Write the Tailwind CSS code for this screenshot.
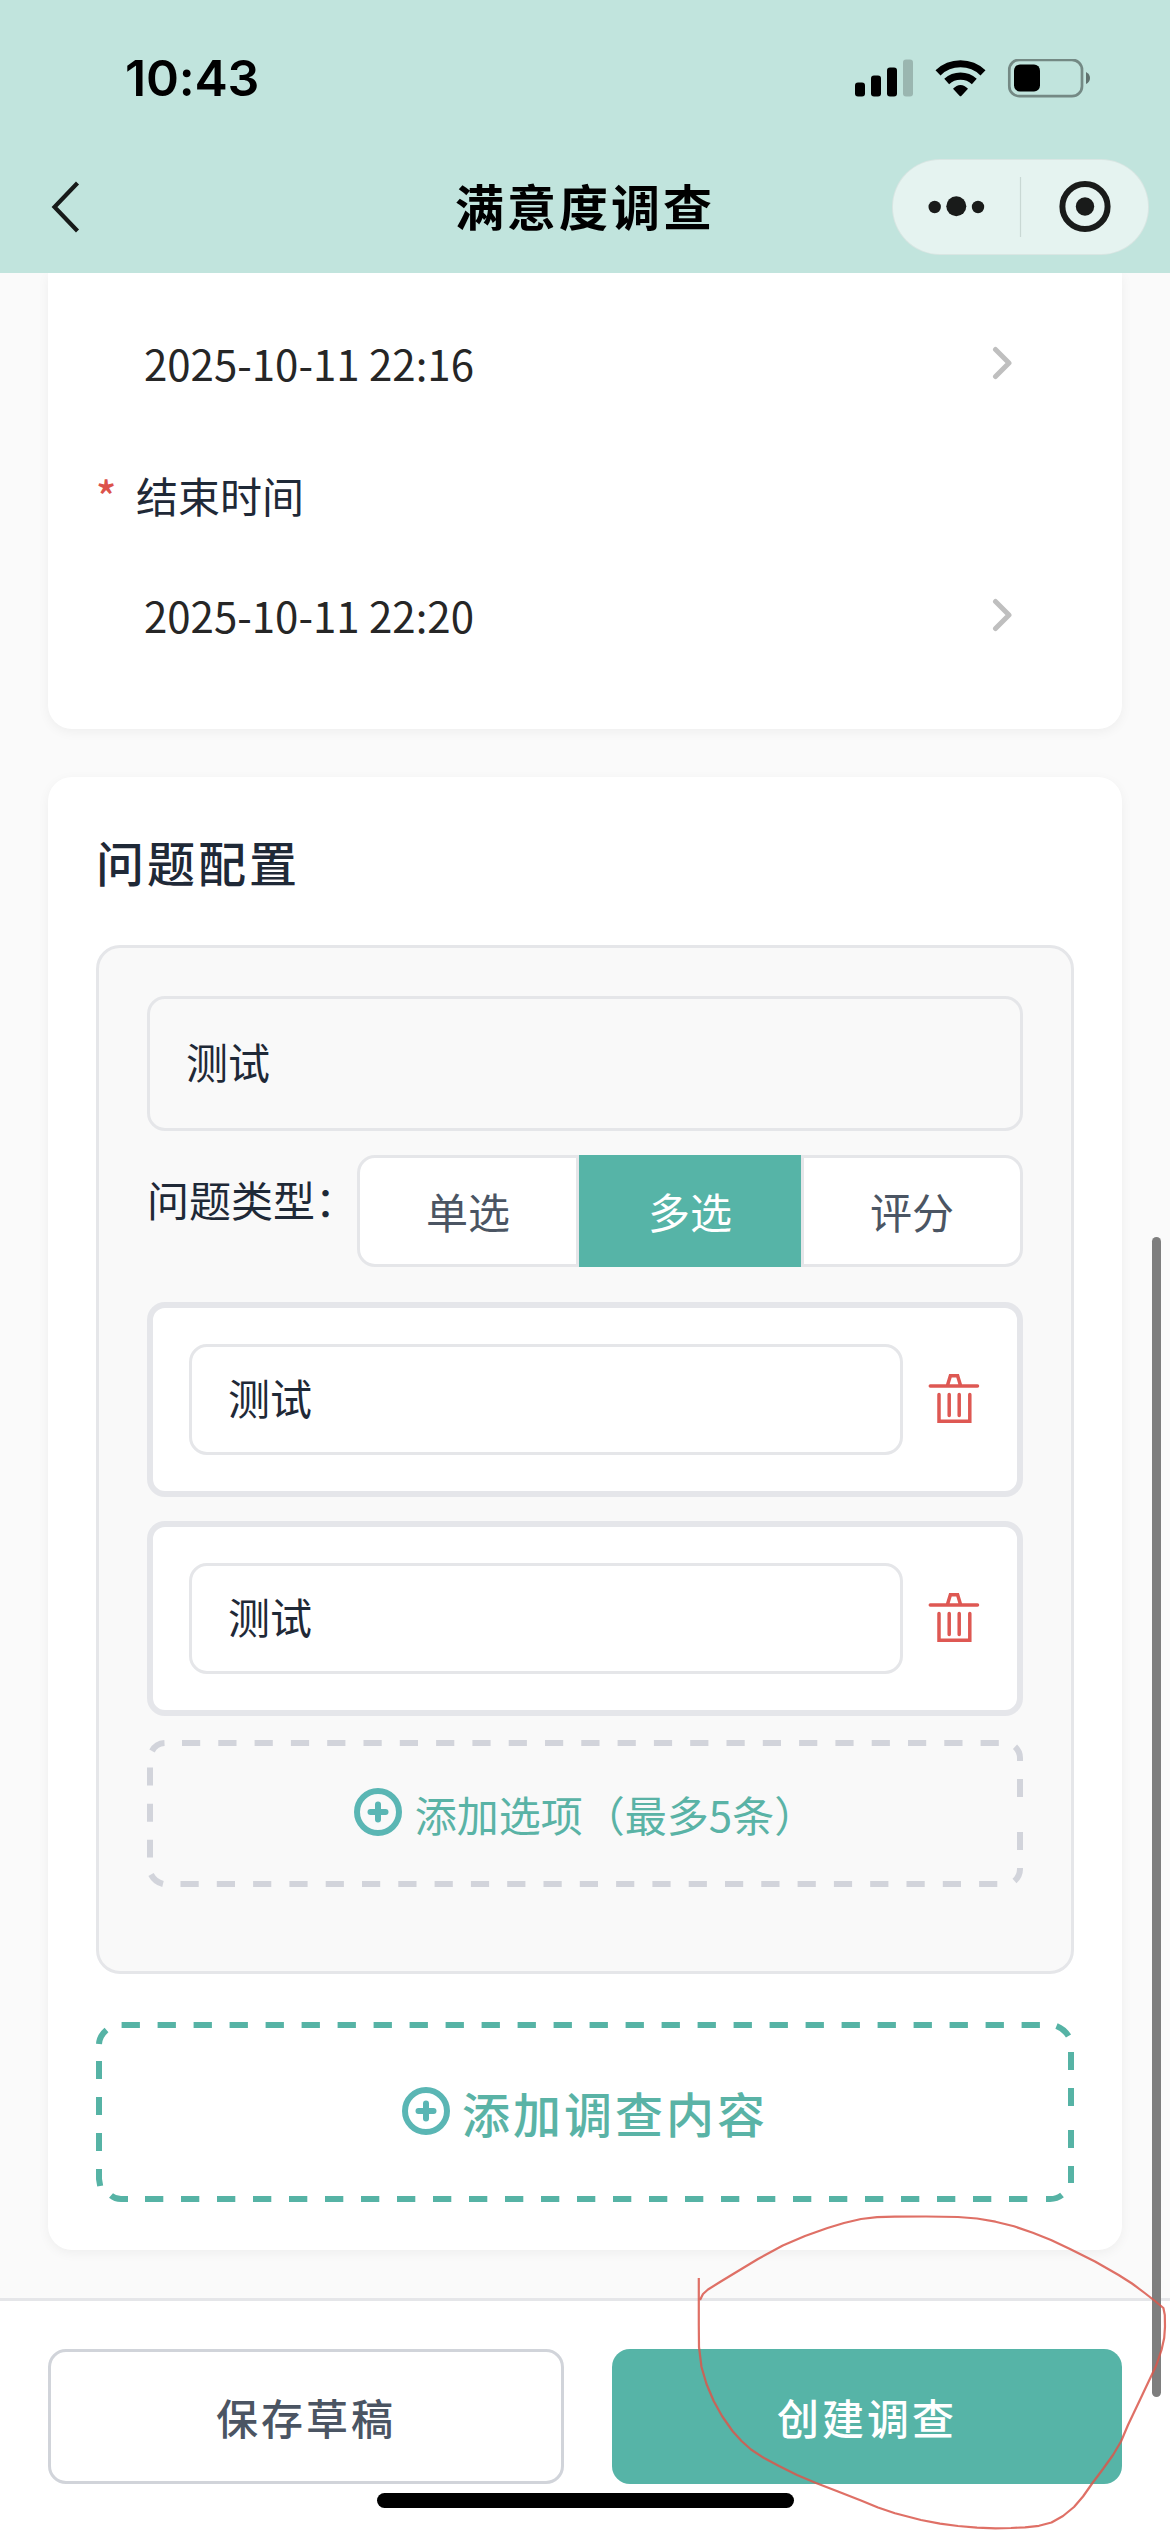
<!DOCTYPE html>
<html lang="zh-CN">
<head>
<meta charset="utf-8">
<title>满意度调查</title>
<script src="https://cdn.jsdelivr.net/npm/@tailwindcss/browser@4"></script>
</head>
<body class="relative flex h-[2532px] w-[1170px] flex-col overflow-hidden bg-[#fafafa] font-['Noto_Sans_CJK_SC',sans-serif] text-[42px] leading-[60px] text-[#1f2937]">

<header class="z-10 flex h-[273px] shrink-0 flex-col bg-[#c1e4dd]">
  <div class="flex h-[159px] items-center justify-between pl-[125px] pr-[78px]">
    <span class="pb-[3px] font-[Inter,sans-serif] text-[50px] font-semibold tracking-[-0.2px] text-black">10:43</span>
    <svg width="238" height="42" viewBox="855 58.500 238 42">
      <rect x="856" y="82" width="10" height="14" rx="3"/>
      <rect x="872" y="75" width="10" height="21" rx="3"/>
      <rect x="888" y="67" width="10" height="29" rx="3"/>
      <rect x="904" y="59" width="10" height="37" rx="3" opacity=".2"/>
      <g fill="none" stroke="#000" stroke-width="7.200">
        <path d="M939 72.300A32.500 32.500 0 0 1 984 72.300"/>
        <path d="M947.700 81A20.500 20.500 0 0 1 975.300 81"/>
      </g>
      <path d="M954 88.300Q957.500 84.500 961.500 84.500T969 88.300L962.500 95.200Q961.500 96.300 960.500 95.200Z"/>
      <rect x="1010.300" y="59.300" width="72.700" height="36.400" rx="10" fill="none" stroke="#000" stroke-opacity=".4" stroke-width="2.700"/>
      <rect x="1015" y="64" width="26" height="27" rx="6"/>
      <path d="M1087 71.500Q1091 73.500 1091 77.500T1087 83.500Z" opacity=".5"/>
    </svg>
  </div>
  <div class="grid h-[96px] grid-cols-[1fr_auto_1fr] items-center px-[21px]">
    <svg class="ml-[29px]" width="32" height="54" viewBox="50 180 32 54" fill="none" stroke="#171a19" stroke-width="4.200"><path d="M77.500 183L54.500 207L77.500 231"/></svg>
    <h1 class="pb-1 text-[49px] font-bold tracking-[3px] text-black">满意度调查</h1>
    <div class="flex h-[96px] w-[257px] items-center justify-self-end rounded-full border border-black/5 bg-[#e5f3f0]">
      <svg width="255" height="94" viewBox="893 160 255 94" fill="#191b1a">
        <circle cx="934.700" cy="207" r="6.200"/><circle cx="956.300" cy="206.300" r="10"/><circle cx="978" cy="207" r="6.200"/>
        <path d="M1020.500 177V237" stroke="#c9d8d4" stroke-width="1.200"/>
        <circle cx="1085" cy="206.500" r="22.600" fill="none" stroke="#191b1a" stroke-width="6"/><circle cx="1085" cy="206.500" r="9.200"/>
      </svg>
    </div>
  </div>
</header>

<main class="flex flex-1 flex-col gap-12 px-12">
  <section class="flex h-[456px] shrink-0 flex-col rounded-b-[24px] bg-white px-12 pt-[60px] shadow-[0_3px_12px_rgba(0,0,0,0.05)]">
    <div class="flex items-center justify-between pl-12 pr-[62px] text-[#262626]">
      <span>2025-10-11 22:16</span>
      <svg class="-mt-px" width="20" height="34" viewBox="0 0 20 34" fill="none" stroke="#bfbfbf" stroke-width="5" stroke-linecap="round" stroke-linejoin="round"><path d="M3.500 3.500L17 17L3.500 30.500"/></svg>
    </div>
    <label class="mt-[72px] flex items-center"><span class="w-[40px] text-[42px] font-medium text-[#dc524b]">*</span>结束时间</label>
    <div class="mt-[60px] flex items-center justify-between pl-12 pr-[62px] text-[#262626]">
      <span>2025-10-11 22:20</span>
      <svg class="-mt-px" width="20" height="34" viewBox="0 0 20 34" fill="none" stroke="#bfbfbf" stroke-width="5" stroke-linecap="round" stroke-linejoin="round"><path d="M3.500 3.500L17 17L3.500 30.500"/></svg>
    </div>
  </section>

  <section class="flex h-[1473px] shrink-0 flex-col rounded-[24px] bg-white px-12 pt-12 shadow-[0_3px_12px_rgba(0,0,0,0.05)]">
    <h2 class="h-[72px] text-[48px] font-medium leading-[72px] tracking-[3px]">问题配置</h2>

    <div class="mt-12 flex h-[1029px] shrink-0 flex-col rounded-[24px] border-3 border-[#e5e6e9] bg-[#f9f9f9] px-12 pt-12">
      <div class="flex h-[135px] shrink-0 items-center rounded-[18px] border-3 border-[#e5e6e9] px-9 pb-[6px]">测试</div>

      <div class="mt-6 flex h-[111px] shrink-0">
        <span class="w-[210px] whitespace-nowrap pt-[14px]">问题类型：</span>
        <div class="grid flex-1 grid-cols-3 text-center leading-[106px] text-[#4b5563]">
          <div class="rounded-l-[18px] border-3 border-[#e5e6e9] bg-white">单选</div>
          <div class="border-3 border-[#56b4a7] bg-[#56b4a7] text-white">多选</div>
          <div class="rounded-r-[18px] border-3 border-[#e5e6e9] bg-white">评分</div>
        </div>
      </div>

      <div class="mt-9 flex h-[195px] shrink-0 items-center rounded-[18px] border-6 border-[#e5e6ea] bg-white px-9">
        <div class="flex h-[111px] w-[714px] items-center rounded-[18px] border-3 border-[#e5e6e9] px-9 pb-[6px]">测试</div>
        <svg class="-mt-px ml-6" width="54" height="54" viewBox="0 0 54 54" fill="none" stroke="#de5853" stroke-width="3.500" stroke-linecap="round"><path d="M3.300 14H50.500M20.600 13L23.400 3.700H30.600L33.400 13M12 22.500V49.200H42.800V22.500M22.200 22.500V43.500M32.200 22.500V43.500"/></svg>
      </div>
      <div class="mt-6 flex h-[195px] shrink-0 items-center rounded-[18px] border-6 border-[#e5e6ea] bg-white px-9">
        <div class="flex h-[111px] w-[714px] items-center rounded-[18px] border-3 border-[#e5e6e9] px-9 pb-[6px]">测试</div>
        <svg class="-mt-px ml-6" width="54" height="54" viewBox="0 0 54 54" fill="none" stroke="#de5853" stroke-width="3.500" stroke-linecap="round"><path d="M3.300 14H50.500M20.600 13L23.400 3.700H30.600L33.400 13M12 22.500V49.200H42.800V22.500M22.200 22.500V43.500M32.200 22.500V43.500"/></svg>
      </div>

      <div class="relative mt-6 flex h-[147px] shrink-0 items-center justify-center gap-[13px] text-[#5ab3a6]">
        <svg class="absolute inset-0" width="876" height="147" viewBox="0 0 876 147" fill="none" stroke="#d2d4db" stroke-width="6">
          <path d="M35 3H852" stroke-dasharray="18.200 18.100"/>
          <path d="M33.500 144H851" stroke-dasharray="18.200 18.100"/>
          <path d="M17.500 3A15 15 0 0 0 5 11M868 6.800Q873 11.500 873 18V21M873 128V129Q873 136 867.500 141M4 134.500Q8 142 16 144"/>
          <path d="M3 27.500V45.500M3 63.700V81.800M3 99.700V117.600M873 39V57M873 92V110"/>
        </svg>
        <svg class="-mt-1" width="48" height="48" viewBox="0 0 48 48" fill="none" stroke="#5ab6b4" stroke-width="6" stroke-linecap="round"><circle cx="24" cy="24" r="21"/><path d="M16.500 24H31.500M24 16.500V31.500"/></svg>
        <span>添加选项（最多5条）</span>
      </div>
    </div>

    <div class="relative mt-12 flex h-[180px] shrink-0 items-center justify-center gap-[12px] text-[48px] font-medium tracking-[3px] text-[#5ab3a6]">
      <svg class="absolute inset-0" width="978" height="180" viewBox="0 0 978 180" fill="none" stroke="#56b3a5" stroke-width="6">
        <path d="M25.600 3H944.500" stroke-dasharray="18.300 17.700"/>
        <path d="M49 177H932" stroke-dasharray="18.300 17.700"/>
        <path d="M10.500 8Q3.500 14 3 22M960.500 4Q968 7 972.500 14M15 173.500Q19 177 25 177H32M950 177H954Q961 177 966 173"/>
        <path d="M3 39V57M3 75V93M3 111V129M3 147V157L4.200 164M975 30V48M975 66V84M975 108V126M975 144V161"/>
      </svg>
      <svg class="-mt-[3px]" width="48" height="48" viewBox="0 0 48 48" fill="none" stroke="#5ab6b4" stroke-width="6" stroke-linecap="round"><circle cx="24" cy="24" r="21"/><path d="M16.500 24H31.500M24 16.500V31.500"/></svg>
      <span>添加调查内容</span>
    </div>
  </section>
</main>

<footer class="flex h-[234px] shrink-0 items-start gap-12 border-t-3 border-[#e5e6e9] bg-white px-12 pt-12 font-medium tracking-[3px]">
  <button class="h-[135px] w-[516px] rounded-[18px] border-3 border-[#d1d4da] text-[#4b5563]">保存草稿</button>
  <button class="h-[135px] w-[510px] rounded-[18px] bg-[#56b4a7] text-white">创建调查</button>
</footer>

<div class="absolute left-[377px] top-[2493px] h-[15px] w-[417px] rounded-full bg-black"></div>
<div class="absolute left-[1152px] top-[1237px] h-[1160px] w-[9px] rounded-full bg-[#7e7e7e]"></div>
<svg class="absolute left-[680px] top-[2200px]" width="490" height="332" viewBox="680 2200 490 332" fill="none" stroke="#d9574b" stroke-opacity=".85" stroke-width="2.200" stroke-linejoin="round">
  <polyline points="698.8,2278 698.8,2298 698.800,2325 699,2347 701.500,2367 706.500,2384 713.700,2401 722,2416 732.500,2431 741.500,2441 751,2449.500 764,2458 779,2466 797,2475 816,2483 838,2491.500 861,2500.500 878,2507.500 895,2513.300 921,2520 940,2523.700 958,2526 977,2527.700 995.500,2528.300 1011,2528 1025,2527.300 1039,2525.800 1051.500,2522.500 1063,2516 1074,2507 1083,2496.500 1092.500,2483 1103,2469 1113,2455 1121,2441.500 1128,2425 1138,2404 1148.500,2381.700 1156,2366 1161.500,2350 1164.200,2338 1165,2326.700 1164.800,2315 1163.400,2308 1155,2301 1144.700,2293 1132,2283.500 1118.600,2275 1095,2261.500 1070,2249 1051,2240 1032.800,2232.700 1014,2226.300 995.500,2221.700 977,2218.500 958,2217 926,2216.500 894.700,2216.700 877,2217.200 861,2219 844,2223 827.500,2228 805,2236 782.800,2245.500 758,2259 734,2273.500 720,2282 708,2289.500 703,2294 700,2300"/>
</svg>
</body>
</html>
